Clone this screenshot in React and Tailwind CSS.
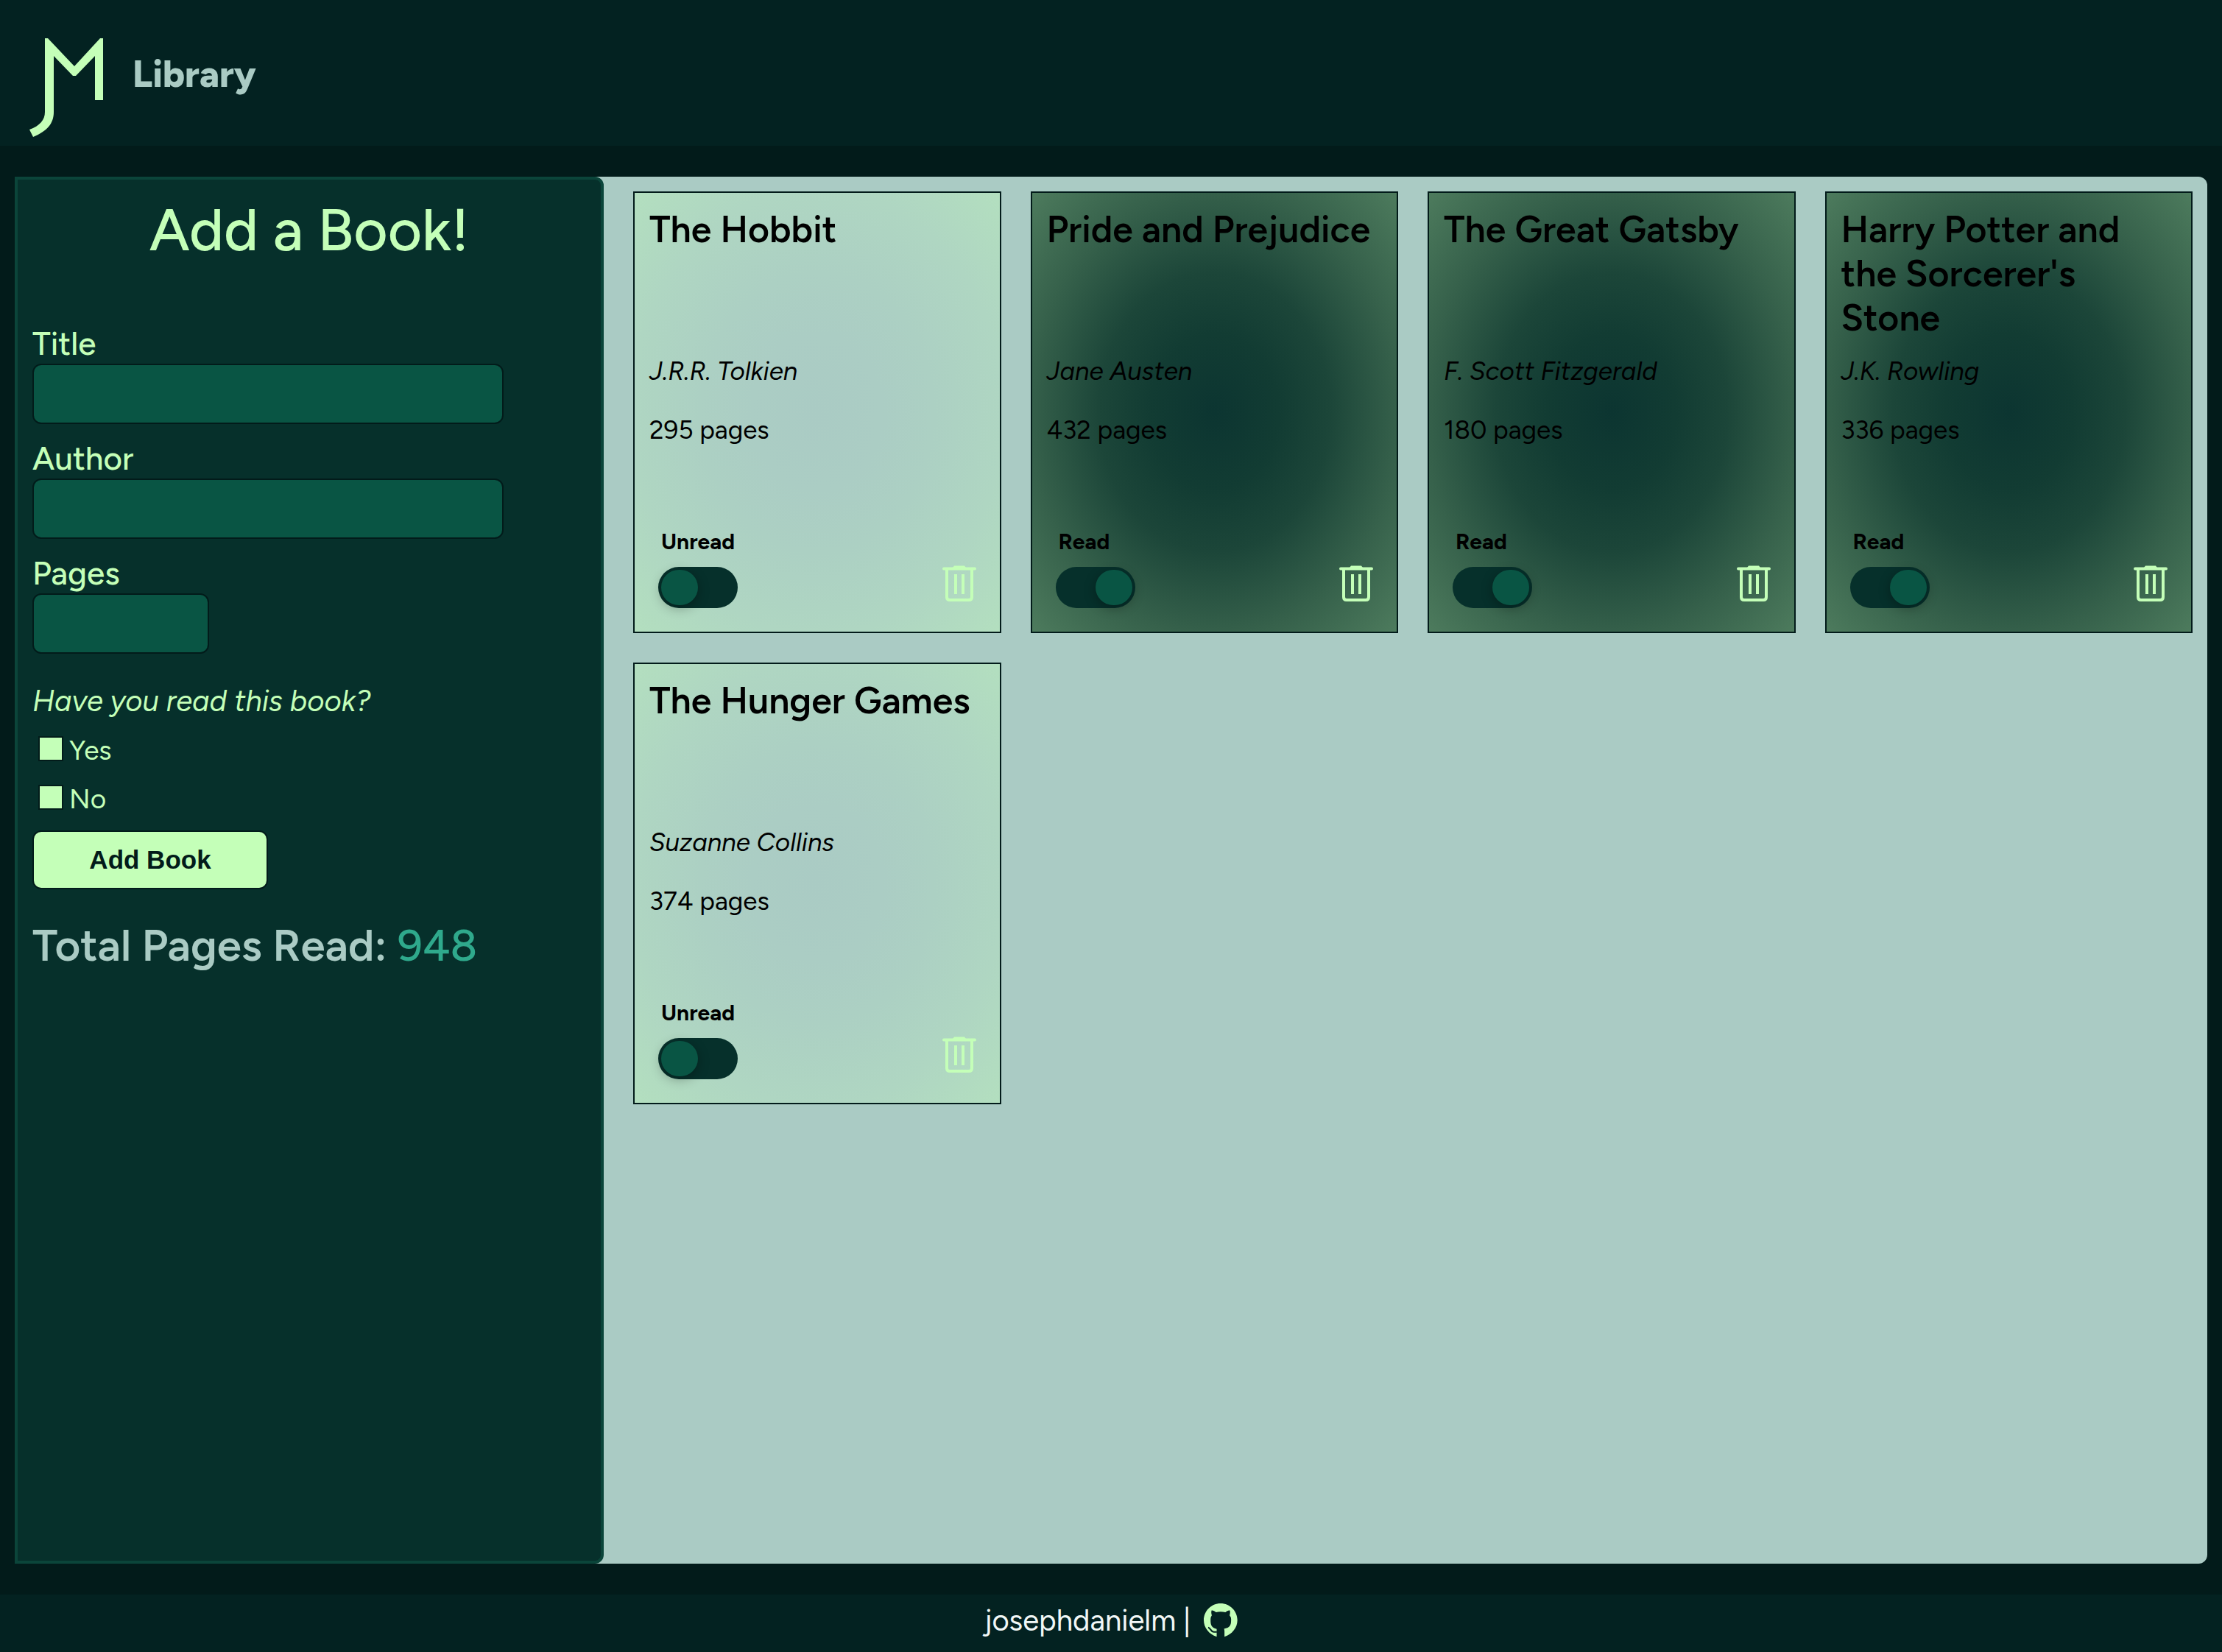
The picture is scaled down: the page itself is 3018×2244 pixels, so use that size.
import React, { useState } from 'react';

const initialBooks = [
  { id: 1, title: 'The Hobbit', author: 'J.R.R. Tolkien', pages: 295, read: false },
  { id: 2, title: 'Pride and Prejudice', author: 'Jane Austen', pages: 432, read: true },
  { id: 3, title: 'The Great Gatsby', author: 'F. Scott Fitzgerald', pages: 180, read: true },
  { id: 4, title: "Harry Potter and the Sorcerer's Stone", author: 'J.K. Rowling', pages: 336, read: true },
  { id: 5, title: 'The Hunger Games', author: 'Suzanne Collins', pages: 374, read: false },
];

function Logo() {
  return (
    <svg viewBox="0 0 100 134" className="h-[134px] w-[100px] shrink-0" aria-label="JM" role="img" fill="#c4ffb8">
      <path d="M21 0H25L61 38L96 0H100V84H89V24L63 51H59L33 24V100C33 116 24 126 5 134L0 124C14 119 21 111 21 100Z" />
    </svg>
  );
}

function TrashIcon() {
  return (
    <svg viewBox="0 0 46 50" className="h-[50px] w-[46px]" fill="none" stroke="#c4ffb8" strokeWidth="4" aria-hidden="true">
      <path d="M2 4.5H44" strokeLinecap="round" />
      <path d="M14 3L16 0.5H30L32 3V5H14Z" fill="#c4ffb8" stroke="none" />
      <path d="M6 5V43Q6 47 10 47H36Q40 47 40 43V5M18 12V39M28 12V39" />
    </svg>
  );
}

function GithubIcon() {
  return (
    <svg viewBox="48 41 139 139" className="size-[46px]" aria-hidden="true">
      <path
        fill="#c4ffb8"
        d="M117 41C79 41 48 72 48 110C48 141 70 168 101 178V146C89 142 76 138 76 114C76 102 76 97 81 90C79 84 78 77 80 70C87 69 92 73 98 77Q117 73 137 77C143 73 148 69 155 70C157 77 156 84 154 90C160 97 161 102 160 114C160 138 145 142 131 145Q133 148 133 154V178C164 168 186 141 186 110C186 72 155 41 117 41Z"
      />
      <path d="M66 140C77 142 76 158 90 158H102" fill="none" stroke="#032221" strokeWidth="6" />
    </svg>
  );
}

function Field({ id, label, width, type = 'text' }) {
  return (
    <div className="mb-5 flex flex-col items-start">
      <label htmlFor={id} className="text-[44px] leading-[54px] font-medium">{label}</label>
      <input id={id} type={type} className={`${width} h-[82px] max-w-full rounded-xl border-2 border-[#021b1a] bg-[#095544] px-4 text-[35px]`} />
    </div>
  );
}

function Check({ id, label, checked, onChange }) {
  return (
    <div className="flex h-[66px] items-center gap-2 pl-2">
      <input id={id} type="checkbox" checked={checked} onChange={onChange} className="mb-1 size-[34px] appearance-none border-2 border-[#021b1a] bg-[#c4ffb8] checked:bg-[#2fa98c]" />
      <label htmlFor={id} className="text-[37px] leading-[44px]">{label}</label>
    </div>
  );
}

function BookCard({ book, onToggle, onDelete }) {
  const tone = book.read
    ? 'bg-[radial-gradient(ellipse,#0c3531_0%,#123c33_25%,#1c4639_45%,#36614b_72%,#4d7b5d_100%)]'
    : 'bg-[radial-gradient(ellipse,#aacbc4_0%,#abcdc4_25%,#acd0c3_45%,#afd6c2_72%,#b3dfbf_100%)]';
  const switchId = `read-${book.id}`;
  return (
    <article className={`flex h-[600px] flex-col border-2 border-[#021b1a] p-5 text-black ${tone}`}>
      <h2 className="h-[200px] text-[50px] leading-[60px] font-semibold">{book.title}</h2>
      <p className="text-[35px] leading-[44px] italic">{book.author}</p>
      <p className="mt-9 text-[35px] leading-[44px]">{book.pages} pages</p>
      <div className="mt-auto flex items-end justify-between px-3 pb-3">
        <div className="flex flex-col gap-4">
          <label htmlFor={switchId} className="pl-1 text-[30px] leading-[36px] font-bold">{book.read ? 'Read' : 'Unread'}</label>
          <button
            id={switchId}
            type="button"
            role="switch"
            aria-checked={book.read}
            onClick={onToggle}
            className={`flex h-14 w-[108px] items-center rounded-full bg-[#06302b] p-1 ${book.read ? 'justify-end' : 'justify-start'}`}
          >
            <span className="h-12 w-[50px] rounded-full bg-[#095544] shadow-[0_4px_16px_rgba(0,0,0,0.3)]" />
          </button>
        </div>
        <button type="button" aria-label={`Delete ${book.title}`} onClick={onDelete} className="mb-2">
          <TrashIcon />
        </button>
      </div>
    </article>
  );
}

export default function App() {
  const [books, setBooks] = useState(initialBooks);
  const [read, setRead] = useState(null);
  const total = books.filter((b) => b.read).reduce((sum, b) => sum + b.pages, 0);

  return (
    <div className="flex min-h-screen flex-col bg-[#021b1a] font-['Figtree','Lato',sans-serif] text-[#c4ffb8]">
      <header className="flex h-[198px] items-center gap-10 bg-[#032221] px-10 pt-10">
        <Logo />
        <h1 className="pb-9 text-[50px] leading-[60px] font-extrabold text-[#aacbc4]">Library</h1>
      </header>

      <main className="mx-5 my-[42px] flex grow rounded-r-xl bg-[#aacbc4]">
        <aside className="w-[800px] shrink-0 rounded-r-xl border-4 border-[#0b453a] bg-[#06302b] p-5">
          <h2 className="text-center text-[80px] leading-[96px] font-medium">Add a Book!</h2>
          <form className="mt-20" onSubmit={(e) => e.preventDefault()}>
            <Field id="title" label="Title" width="w-[640px]" />
            <Field id="author" label="Author" width="w-[640px]" />
            <Field id="pages" label="Pages" width="w-[240px]" />
            <fieldset>
              <legend className="pt-5 pb-2.5 text-[40px] leading-[48px] italic">Have you read this book?</legend>
              <Check id="read-yes" label="Yes" checked={read === true} onChange={() => setRead(true)} />
              <Check id="read-no" label="No" checked={read === false} onChange={() => setRead(false)} />
            </fieldset>
            <button type="submit" className="mt-2.5 h-20 w-[320px] rounded-xl border-2 border-[#021b1a] bg-[#c4ffb8] font-['Liberation_Sans',sans-serif] text-[35px] font-bold text-[#021b1a]">Add Book</button>
          </form>
          <p className="mt-10 text-[60px] leading-[72px] font-semibold text-[#aacbc4]">
            Total Pages Read: <span className="font-medium text-[#2fa98c]">{total}</span>
          </p>
        </aside>

        <section className="grid grow grid-cols-4 content-start gap-10 pt-5 pr-5 pb-5 pl-10" aria-label="Books">
          {books.map((book) => (
            <BookCard
              key={book.id}
              book={book}
              onToggle={() => setBooks(books.map((b) => (b.id === book.id ? { ...b, read: !b.read } : b)))}
              onDelete={() => setBooks(books.filter((b) => b.id !== book.id))}
            />
          ))}
        </section>
      </main>

      <footer className="flex h-[78px] items-center justify-center gap-[18px] bg-[#032221] pb-2 text-[40px] leading-[48px] text-[#f1f7f6]">
        <span>josephdanielm |</span>
        <a href="#github" aria-label="GitHub">
          <GithubIcon />
        </a>
      </footer>
    </div>
  );
}
